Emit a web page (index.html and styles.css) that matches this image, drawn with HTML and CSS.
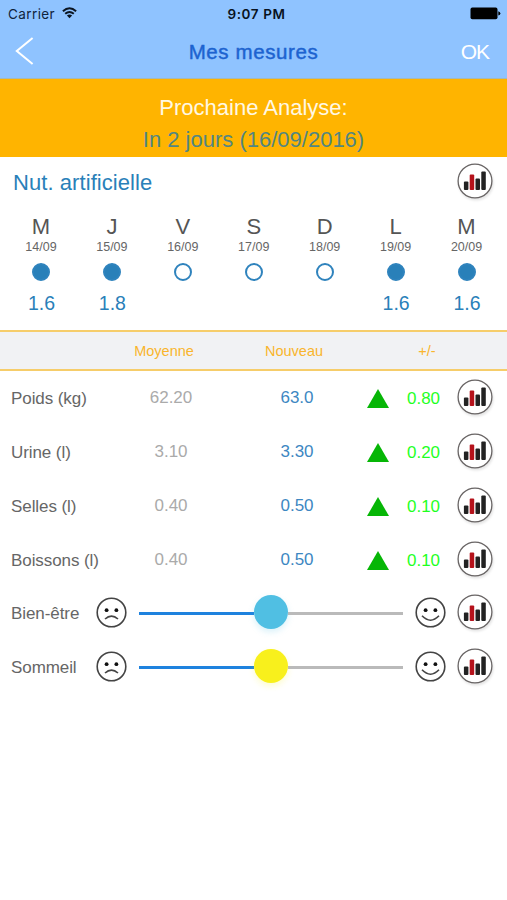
FILE: index.html
```html
<!DOCTYPE html>
<html lang="fr">
<head>
<meta charset="utf-8">
<title>Mes mesures</title>
<link rel="stylesheet" href="styles.css">
</head>
<body>
<svg class="defs" width="0" height="0" aria-hidden="true">
  <symbol id="chart" viewBox="0 0 40 40">
    <circle class="chart-ring" cx="20" cy="20" r="16.9"/>
    <g class="bar-dark"><rect x="8.9" y="20.4" width="4.5" height="8.6" rx="1"/><rect x="20.5" y="17.6" width="4.5" height="11.4" rx="1"/><rect x="26.3" y="10.6" width="4.5" height="18.4" rx="1"/></g>
    <rect class="bar-red" x="14.7" y="13.4" width="4.5" height="15.6" rx="1"/>
  </symbol>
  <symbol id="sad" viewBox="0 0 31 31">
    <circle class="line" cx="15.5" cy="15.5" r="14.3"/>
    <circle cx="10.6" cy="13.2" r="1.9"/><circle cx="20.4" cy="13.2" r="1.9"/>
    <path class="line" d="M9 22Q15.5 16.2 22 22"/>
  </symbol>
  <symbol id="happy" viewBox="0 0 31 31">
    <circle class="line" cx="15.5" cy="15.5" r="14.3"/>
    <circle cx="10.6" cy="13.2" r="1.9"/><circle cx="20.4" cy="13.2" r="1.9"/>
    <path class="line" d="M7 18.8Q15.5 27.6 24 18.8"/>
  </symbol>
</svg>

<header class="top">
  <div class="status">
    <div class="carrier"><span>Carrier</span>
      <svg class="wifi" width="15" height="12" viewBox="0 0 15 12"><path d="M.9 4.2Q7.5-1.6 14.1 4.2M3.2 6.8Q7.5 3.2 11.8 6.8"/><path class="wifi-dot" d="M4.9 8.6Q7.5 6.6 10.1 8.6L7.5 11.3Z"/></svg>
    </div>
    <div class="clock">9:07 PM</div>
    <svg class="battery" width="31" height="13" viewBox="0 0 31 13"><rect x=".5" y=".6" width="27" height="11.6" rx="1.8"/><path d="M28.3 4.2Q30.4 5 30.4 6.4T28.3 8.6Z"/></svg>
  </div>
  <nav class="nav">
    <svg class="back" width="20" height="28" viewBox="0 0 20 28"><path d="M17.6 1L1.8 14L17.6 27"/></svg>
    <h1>Mes mesures</h1>
    <span class="ok">OK</span>
  </nav>
</header>

<section class="next">
  <div class="next-title">Prochaine Analyse:</div>
  <div class="next-date">In 2 jours (16/09/2016)</div>
</section>

<section class="nutrition">
  <div class="nut-head"><h2>Nut. artificielle</h2><svg class="chart"><use href="#chart"/></svg></div>
  <div class="week">
    <div class="day"><b>M</b><small>14/09</small><i class="dot full"></i><span>1.6</span></div>
    <div class="day"><b>J</b><small>15/09</small><i class="dot full"></i><span>1.8</span></div>
    <div class="day"><b>V</b><small>16/09</small><i class="dot"></i></div>
    <div class="day"><b>S</b><small>17/09</small><i class="dot"></i></div>
    <div class="day"><b>D</b><small>18/09</small><i class="dot"></i></div>
    <div class="day"><b>L</b><small>19/09</small><i class="dot full"></i><span>1.6</span></div>
    <div class="day"><b>M</b><small>20/09</small><i class="dot full"></i><span>1.6</span></div>
  </div>
</section>

<div class="columns"><span class="c-avg">Moyenne</span><span class="c-new">Nouveau</span><span class="c-diff">+/-</span></div>

<main class="rows">
  <div class="row"><span class="label">Poids (kg)</span><span class="avg">62.20</span><span class="new">63.0</span><i class="up"></i><span class="diff">0.80</span><svg class="chart"><use href="#chart"/></svg></div>
  <div class="row"><span class="label">Urine (l)</span><span class="avg">3.10</span><span class="new">3.30</span><i class="up"></i><span class="diff">0.20</span><svg class="chart"><use href="#chart"/></svg></div>
  <div class="row"><span class="label">Selles (l)</span><span class="avg">0.40</span><span class="new">0.50</span><i class="up"></i><span class="diff">0.10</span><svg class="chart"><use href="#chart"/></svg></div>
  <div class="row"><span class="label">Boissons (l)</span><span class="avg">0.40</span><span class="new">0.50</span><i class="up"></i><span class="diff">0.10</span><svg class="chart"><use href="#chart"/></svg></div>
  <div class="row slide"><span class="label">Bien-être</span><svg class="face"><use href="#sad"/></svg><div class="slider"><i class="done"></i><i class="knob blue"></i><i class="rest"></i></div><svg class="face"><use href="#happy"/></svg><svg class="chart"><use href="#chart"/></svg></div>
  <div class="row slide"><span class="label">Sommeil</span><svg class="face"><use href="#sad"/></svg><div class="slider"><i class="done"></i><i class="knob yellow"></i><i class="rest"></i></div><svg class="face"><use href="#happy"/></svg><svg class="chart"><use href="#chart"/></svg></div>
</main>
</body>
</html>
```

FILE: styles.css
```css
* { box-sizing: border-box; }
body { margin: 0; background: #fff; color: #666; font-family: "Liberation Sans", Arial, sans-serif; height: 900px; overflow: hidden; }
h1, h2 { margin: 0; font-weight: normal; }
.defs { display: block; }
svg { display: block; }

.top { height: 79px; background: #8fc3ff; border-bottom: 1px solid #a5b9b8; }
.status { height: 27px; display: grid; grid-template-columns: 1fr auto 1fr; align-items: center; padding: 1px 6px 0 8px; font-family: Inter, sans-serif; color: #10233c; }
.carrier { display: flex; align-items: center; gap: 7px; font-size: 13.5px; letter-spacing: .4px; }
.wifi { margin-top: -2px; }
.wifi path { fill: none; stroke: #0b1522; stroke-width: 2; }
.wifi .wifi-dot { fill: #0b1522; stroke: none; }
.clock { font-size: 13.5px; font-weight: 600; color: #081322; letter-spacing: .6px; padding-left: 4px; }
.battery { justify-self: end; fill: #000; margin-top: -2px; }
.nav { height: 49px; display: grid; grid-template-columns: 1fr auto 1fr; align-items: center; padding: 0 18px 0 15px; }
.back { margin-top: -2px; }
.back path { fill: none; stroke: #fff; stroke-width: 2; }
.nav h1 { font-size: 20.5px; color: #1d63d0; -webkit-text-stroke: .45px #1d63d0; letter-spacing: .6px; padding: 1px 0 0 3px; }
.ok { justify-self: end; color: #fff; font-size: 21px; letter-spacing: -1px; padding-top: 1px; }

.next { height: 78px; background: #ffb400; text-align: center; font-size: 22px; line-height: 32px; padding-top: 13px; }
.next-title { color: #fff8e4; }
.next-date { color: #528682; }

.nutrition { height: 173px; color: #2980b9; }
.nut-head { height: 51px; display: flex; align-items: center; justify-content: space-between; padding: 0 12px 0 13px; }
.nut-head h2 { font-size: 22px; letter-spacing: .07px; }
.chart { width: 40px; height: 40px; justify-self: center; filter: drop-shadow(1px 2px 1px rgba(0,0,0,.1)); margin-top: -2px; }
.nut-head .chart { margin-top: -3px; }
.chart-ring { fill: #fff; stroke: #686464; stroke-width: 1.3; }
.bar-dark { fill: #222; }
.bar-red { fill: #b5121b; }
.week { display: grid; grid-template-columns: repeat(7, 1fr); padding: 5px 5px 0 5.5px; }
.day { display: flex; flex-direction: column; align-items: center; }
.day b { font-weight: normal; font-size: 22px; line-height: 28px; color: #555; }
.day small { font-size: 12.5px; line-height: 14px; color: #666; margin-top: -1px; }
.dot { width: 18px; height: 18px; margin-top: 9px; border: 2px solid #2f83bd; border-radius: 50%; }
.dot.full { background: #2980b9; }
.day span { font-size: 19.5px; line-height: 24px; margin: 10px 0 0 1px; }

.columns { height: 41px; display: grid; grid-template-columns: 108px 112px 148px 118px; align-items: center; background: #f1f2f4; border: solid #f6cd6a; border-width: 2px 0; color: #f9b52c; font-size: 14.5px; text-align: center; padding-top: 1px; }
.c-avg { grid-column: 2; }

.rows { padding-top: .5px; }
.row { height: 53.75px; display: grid; grid-template-columns: 97px 126px 126px 36px 55px 48px; align-items: center; padding-left: 11px; font-size: 17px; text-align: center; }
.label { text-align: left; color: #666; white-space: nowrap; padding-top: 2px; letter-spacing: -.08px; }
.avg { color: #aaa; }
.new { color: #3d87c2; }
.diff { color: #1fff1f; padding-top: 2px; }
.up { justify-self: center; border: solid transparent; border-width: 0 11px 19px; border-bottom-color: #06b606; margin-top: 1px; }
.slide { grid-template-columns: 85px 31px 288px 31px 5px 48px; }
.slide .chart { grid-column: 6; }
.face { width: 31px; height: 31px; fill: #111; margin-top: -1px; }
.line { fill: none; stroke: #444; stroke-width: 1.6; }
.slider { display: flex; align-items: center; padding: 0 12px; }
.done, .rest { flex: 1; height: 3px; background: #1e82de; }
.rest { background: #bababa; }
.knob { width: 34px; height: 34px; border-radius: 50%; margin-top: -2px; }
.blue { background: #50bfe3; box-shadow: 0 3px 6px rgba(80,191,227,.22); }
.yellow { background: #f8f01c; box-shadow: 0 3px 6px rgba(248,240,28,.22); }
```
